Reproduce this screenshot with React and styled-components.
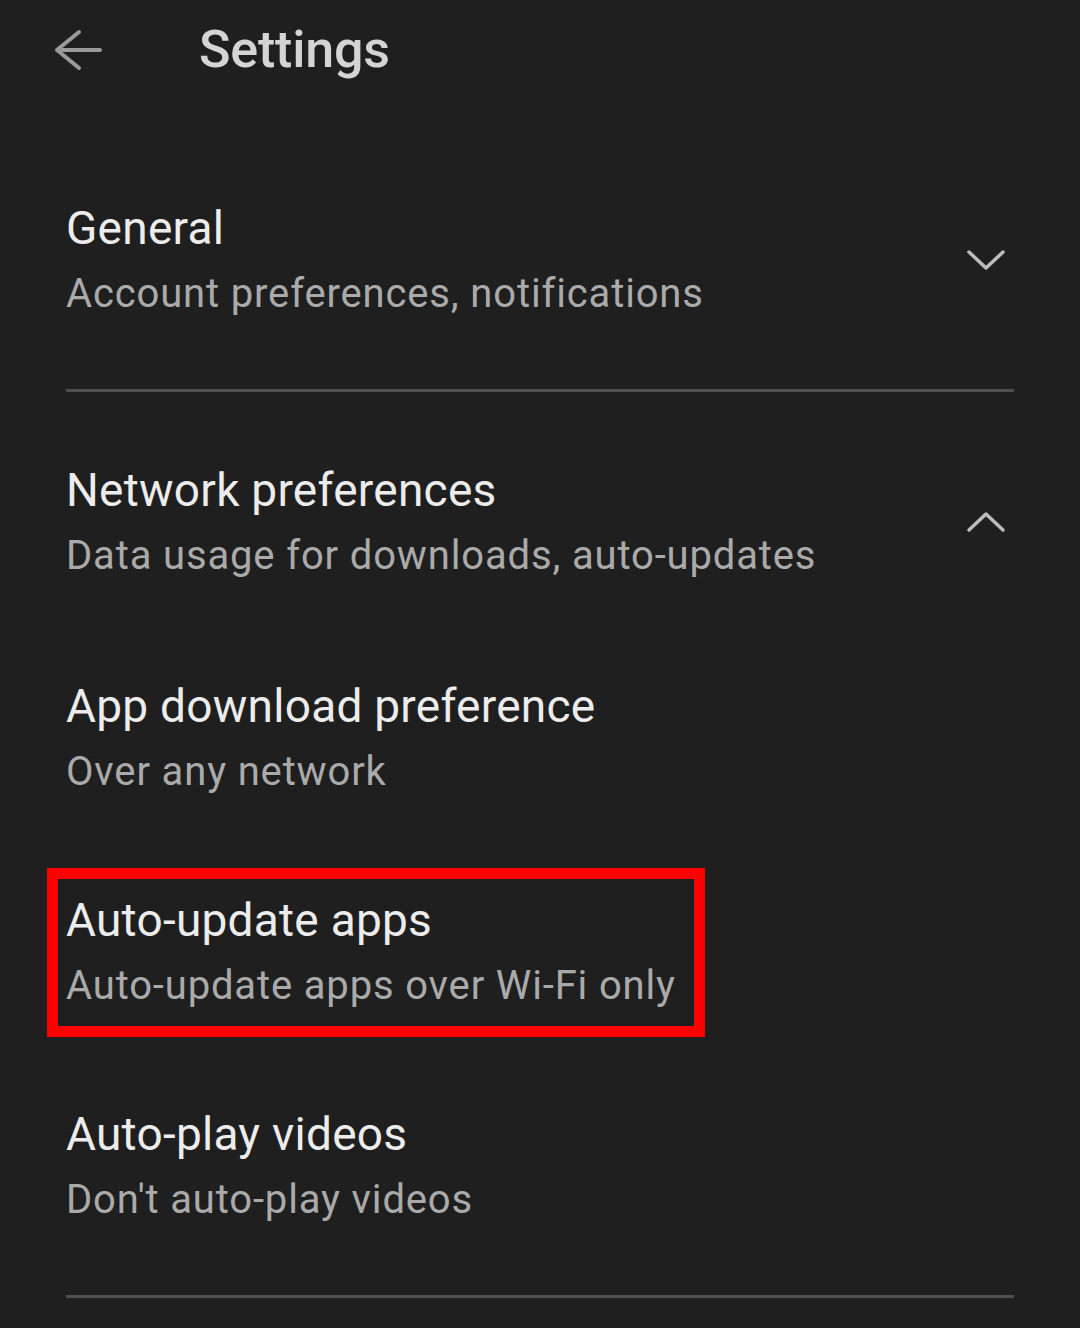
import React from "react";
import styled, { createGlobalStyle } from "styled-components";

const GlobalStyle = createGlobalStyle`
  html, body {
    margin: 0;
    padding: 0;
    background: #1f1f1f;
  }
  body {
    font-family: Roboto, "Noto Sans", "Liberation Sans", sans-serif;
    -webkit-font-smoothing: antialiased;
  }
`;

const Page = styled.div`
  width: 1080px;
  height: 1328px;
  background: #1f1f1f;
  overflow: hidden;
`;

const Header = styled.header`
  display: flex;
  align-items: center;
  height: 100px;
  padding-left: 54px;
`;

const BackButton = styled.button`
  display: flex;
  width: 48px;
  height: 48px;
  padding: 0;
  border: none;
  background: none;
  color: #9a9a9a;
  cursor: pointer;
`;

const PageTitle = styled.h1`
  margin: 0 0 0 97px;
  font-size: 52px;
  line-height: 60px;
  font-weight: 500;
  letter-spacing: -0.2px;
  color: #d4d4d4;
`;

const List = styled.div`
  padding: 31px 66px 0;
`;

const Group = styled.section`
  display: flex;
  align-items: center;
  justify-content: space-between;
  padding: ${(p) => p.$pad || "69px 0"};
`;

const Item = styled.div`
  padding: 47px 0;
`;

const Texts = styled.div`
  display: flex;
  flex-direction: column;
`;

const Highlight = styled.div`
  display: inline-block;
  border: 11px solid #ff0000;
  padding: 13px 18px 14px 8px;
  margin: -24px -29px -25px -19px;
`;

const Title = styled.div`
  font-size: 46px;
  line-height: 56px;
  letter-spacing: 0.25px;
  color: #ececec;
  white-space: nowrap;
`;

const Subtitle = styled.div`
  margin-top: 12px;
  font-size: 40px;
  line-height: 52px;
  letter-spacing: 0.85px;
  color: #aaaaaa;
  white-space: nowrap;
`;

const Divider = styled.hr`
  margin: ${(p) => p.$mt || 0}px 0 0;
  border: none;
  height: 3px;
  background: #4f4f4f;
`;

const Chevron = styled.svg`
  width: 40px;
  height: 24px;
  margin-right: 8px;
  color: #bcbcbc;
`;

function ArrowBack() {
  return (
    <svg width="48" height="48" viewBox="0 0 48 48" fill="none">
      <path
        d="M25 6 L3 24 L25 42 M3 24 H46"
        stroke="currentColor"
        strokeWidth="4"
        strokeLinecap="round"
        strokeLinejoin="round"
      />
    </svg>
  );
}

function ChevronIcon({ up }) {
  return (
    <Chevron viewBox="0 0 40 24" fill="none">
      <path
        d={up ? "M3 20 L20 4 L37 20" : "M3 4 L20 20 L37 4"}
        stroke="currentColor"
        strokeWidth="3.5"
        strokeLinecap="round"
        strokeLinejoin="round"
      />
    </Chevron>
  );
}

function TextBlock({ title, subtitle }) {
  return (
    <Texts>
      <Title>{title}</Title>
      <Subtitle>{subtitle}</Subtitle>
    </Texts>
  );
}

export default function App() {
  return (
    <Page>
      <GlobalStyle />
      <Header>
        <BackButton aria-label="Back">
          <ArrowBack />
        </BackButton>
        <PageTitle>Settings</PageTitle>
      </Header>

      <List>
        <Group>
          <TextBlock
            title="General"
            subtitle="Account preferences, notifications"
          />
          <ChevronIcon />
        </Group>

        <Divider />

        <Group $pad="70px 0 49px">
          <TextBlock
            title="Network preferences"
            subtitle="Data usage for downloads, auto-updates"
          />
          <ChevronIcon up />
        </Group>

        <Item>
          <TextBlock
            title="App download preference"
            subtitle="Over any network"
          />
        </Item>

        <Item>
          <Highlight>
            <TextBlock
              title="Auto-update apps"
              subtitle="Auto-update apps over Wi-Fi only"
            />
          </Highlight>
        </Item>

        <Item>
          <TextBlock
            title="Auto-play videos"
            subtitle="Don't auto-play videos"
          />
        </Item>

        <Divider $mt={22} />
      </List>
    </Page>
  );
}
